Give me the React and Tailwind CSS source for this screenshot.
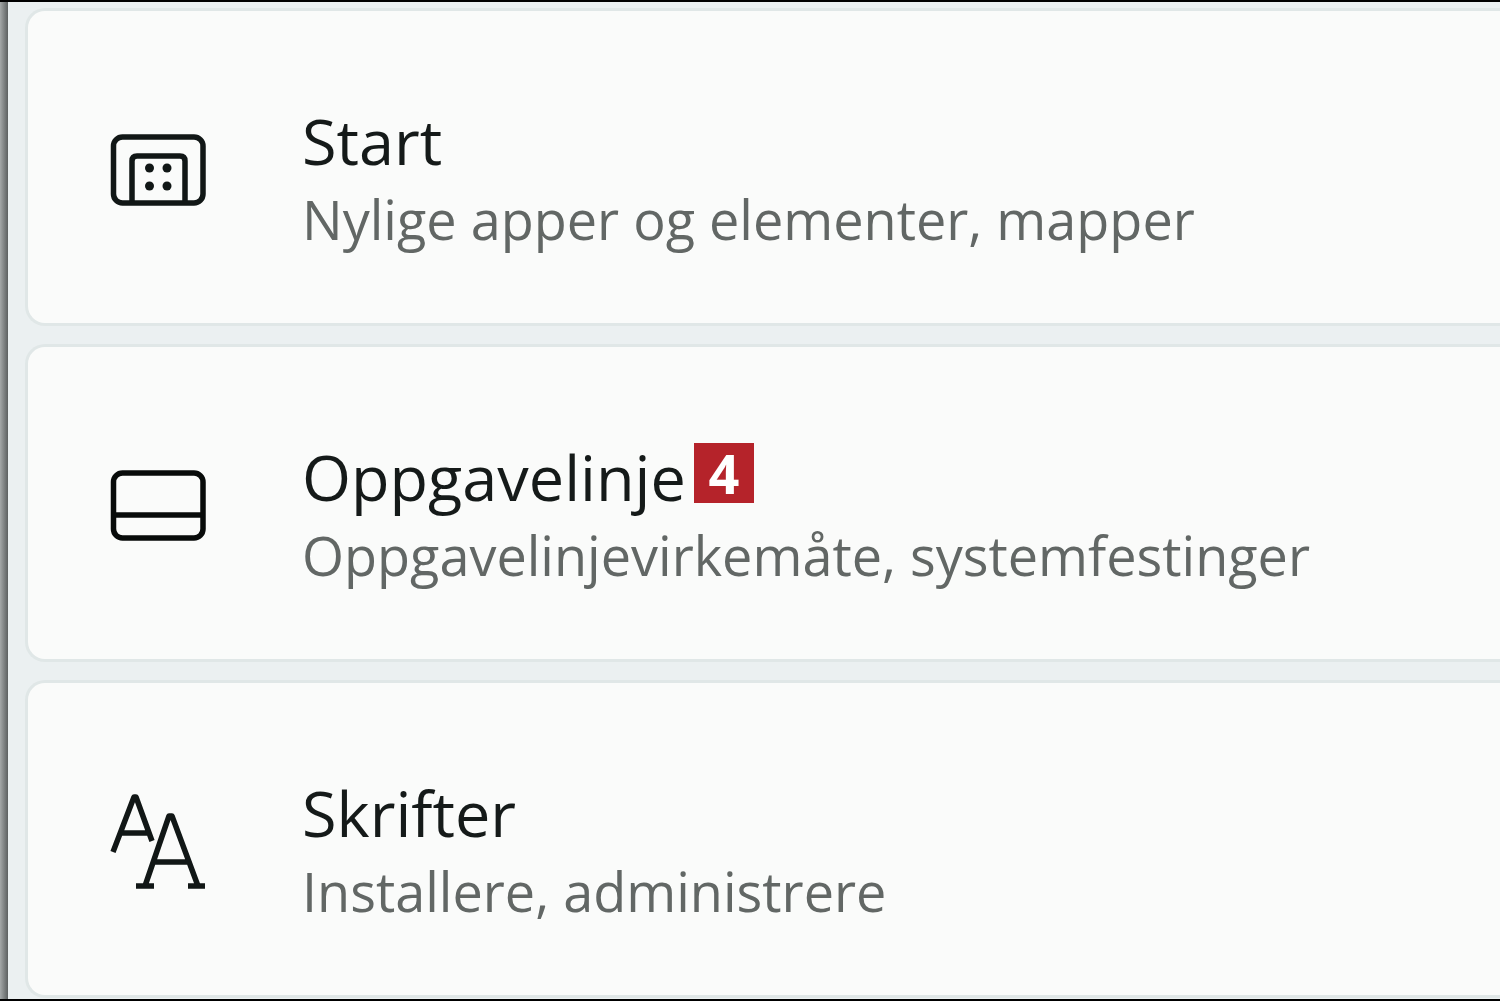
import React from 'react';

const StartIcon = () => (
    <svg className="w-24 h-24" viewBox="0 0 96 96" fill="none" stroke="#111716" strokeWidth="5.5" aria-hidden="true">
        <rect x="3.5" y="18" width="89.5" height="66" rx="9" />
        <path d="M22 83V42q0-5 5-5h43q5 0 5 5v41" />
        <g fill="#111716" stroke="none">
            <circle cx="39.5" cy="49" r="4.5" />
            <circle cx="57" cy="49" r="4.5" />
            <circle cx="39.5" cy="67" r="4.5" />
            <circle cx="57" cy="67" r="4.5" />
        </g>
    </svg>
);

const TaskbarIcon = () => (
    <svg className="w-24 h-24" viewBox="0 0 96 96" fill="none" stroke="#080b0a" strokeWidth="5.5" aria-hidden="true">
        <rect x="3.5" y="18" width="89.5" height="65" rx="9" />
        <path d="M4 60h89" />
    </svg>
);

const FontsIcon = () => (
    <svg className="w-24 h-24 overflow-visible" viewBox="0 0 96 96" fill="none" stroke="#111716" strokeWidth="5.5" strokeLinejoin="round" aria-hidden="true">
        <path d="M3 61L24 6h2l16 44M11 42h28" />
        <path d="M35 95L59 25h3l26 70M44 71h34M26 95h18M78 95h17" />
    </svg>
);

const items = [
    { id: 'start', title: 'Start', text: 'Nylige apper og elementer, mapper', Icon: StartIcon },
    { id: 'oppgavelinje', title: 'Oppgavelinje', text: 'Oppgavelinjevirkemåte, systemfestinger', Icon: TaskbarIcon, badge: 4 },
    { id: 'skrifter', title: 'Skrifter', text: 'Installere, administrere', Icon: FontsIcon },
];

const SettingsRow = ({ id, title, text, Icon, badge }) => (
    <a
        href={`#${id}`}
        className="flex items-center gap-24 h-[318px] pl-[82px] rounded-l-[20px] border-3 border-r-0 border-[#e0e7e7] bg-[#fafbfa]">
        <Icon />
        <div className="whitespace-nowrap pt-5">
            <div className="flex items-center gap-2">
                <h2 className="text-[63px] leading-[84px] text-[#151a19]">{title}</h2>
                {badge ? (
                    <span className="flex items-center justify-center size-[60px] mb-2 bg-[#b5232a] text-white text-[54px] leading-[60px] font-bold">
                        {badge}
                    </span>
                ) : null}
            </div>
            <p className="text-[54px] leading-[72px] text-[#626765]">{text}</p>
        </div>
    </a>
);

const App = () => (
    <main className="flex overflow-hidden border-y-2 border-black bg-[#ebf0f1] font-['Open_Sans',sans-serif]">
        <div className="w-2 shrink-0 bg-linear-to-r from-[#a5a9a9] to-[#5d6161]" />
        <nav className="flex flex-col grow gap-[18px] pt-[6px] pb-px pl-[17px]" aria-label="Innstillinger">
            {items.map((item) => <SettingsRow key={item.id} {...item} />)}
        </nav>
    </main>
);

export default App;
